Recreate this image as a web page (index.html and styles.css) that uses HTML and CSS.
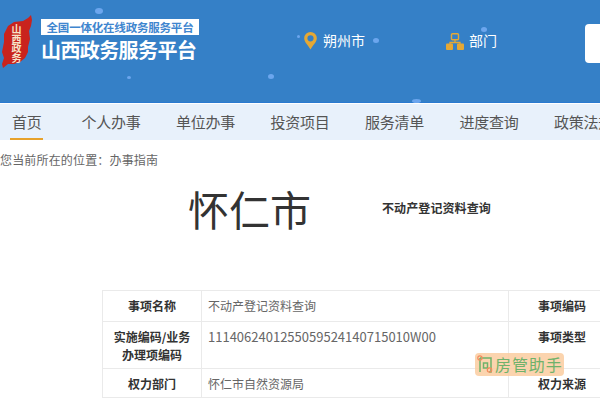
FILE: index.html
```html
<!DOCTYPE html>
<html lang="zh-CN">
<head>
<meta charset="utf-8">
<title>山西政务服务平台</title>
<link rel="stylesheet" href="styles.css">
</head>
<body>
<header class="header">
  <span class="dot d1"></span><span class="dot d2"></span><span class="dot d3"></span><span class="dot d4"></span><span class="dot d5"></span><span class="dot d6"></span><span class="dot d7"></span>
  <div class="brand">
    <div class="logo">
      <svg width="32" height="54" viewBox="0 0 32 54" aria-hidden="true"><path d="M30 1 L31 6 L30 12 L28 17 L29 25 L27 33 L27 38 L24 44 L19 48 L13 50 L7 50 L2 54 L1 50 L3 44 L1 38 L3 28 L3 20 L7 12 L13 8 L22 7 L27 4 Z" fill="#c9231d"/></svg>
      <span class="logo-text">山西政务</span>
    </div>
    <div class="titles">
      <div class="tag">全国一体化在线政务服务平台</div>
      <div class="title">山西政务服务平台</div>
    </div>
  </div>
  <div class="loc">
    <svg width="13" height="18" viewBox="0 0 13 18" aria-hidden="true"><path fill-rule="evenodd" d="M6.5 0a6.3 6.3 0 0 1 6.3 6.3c0 4-4 7-6.3 11.2C4.200 13.300.200 10.300.200 6.300A6.300 6.300 0 0 1 6.500 0Zm0 3.200a3.100 3.100 0 1 0 0 6.200 3.100 3.100 0 0 0 0-6.200Z" fill="#e5a835"/></svg>
    <span>朔州市</span>
  </div>
  <div class="dept">
    <svg width="18" height="17" viewBox="0 0 18 17" aria-hidden="true"><rect x="5.500" y=".7" width="7" height="6" rx="1" fill="none" stroke="#e5a835" stroke-width="1.400"/><path d="M9 7v3M4 11V9.500h10V11" fill="none" stroke="#e5a835" stroke-width="1.300"/><rect x="0" y="10.500" width="7" height="6.500" rx="1" fill="#e5a835"/><rect x="11" y="10.500" width="7" height="6.500" rx="1" fill="#e5a835"/></svg>
    <span>部门</span>
  </div>
  <div class="search"></div>
</header>
<nav class="nav">
  <a class="item active">首页</a>
  <a class="item">个人办事</a>
  <a class="item">单位办事</a>
  <a class="item">投资项目</a>
  <a class="item">服务清单</a>
  <a class="item">进度查询</a>
  <a class="item">政策法规</a>
</nav>
<div class="crumb">您当前所在的位置：办事指南</div>
<div class="heading">
  <h1 class="city">怀仁市</h1>
  <h2 class="name">不动产登记资料查询</h2>
</div>
<table class="info">
  <tr class="r1"><th class="c1">事项名称</th><td class="c2">不动产登记资料查询</td><th class="c3">事项编码</th></tr>
  <tr class="r2"><th class="c1">实施编码/业务办理项编码</th><td class="c2"><span class="code">1114062401255059524140715010W00</span></td><th class="c3">事项类型</th></tr>
  <tr class="r3"><th class="c1">权力部门</th><td class="c2">怀仁市自然资源局</td><th class="c3">权力来源</th></tr>
</table>
<div class="mark">
  <svg width="17" height="19" viewBox="0 0 17 19" aria-hidden="true"><path d="M3 3v14M3 3h11v14h-2M6.500 8h4v5h-4Z" fill="none" stroke="#6fb26b" stroke-width="1.500"/><circle cx="3" cy="3" r="2.200" fill="none" stroke="#f58a5c" stroke-width="1.200"/><circle cx="12.500" cy="15" r="2.200" fill="none" stroke="#f58a5c" stroke-width="1.200"/></svg>
  <span>房管助手</span>
</div>
</body>
</html>
```
FILE: styles.css
```css
html, body { margin: 0; padding: 0; height: 400px; overflow: hidden; background: #fff; }
body { position: relative; font-family: "Noto Sans CJK SC", "Noto Sans", sans-serif; color: #333; }

.header { position: relative; box-sizing: border-box; height: 104px; background: #3580c7; border-bottom: 1px solid #fff; box-shadow: inset 0 -1px 0 #2a7ad0; display: flex; align-items: flex-start; color: #fff; }
.dot { position: absolute; border-radius: 50%; background: #6ca6ee; }
.d1 { left: 95px; top: 8px; width: 8px; height: 6px; }
.d2 { left: 127px; top: 76px; width: 4px; height: 3px; }
.d3 { left: 268px; top: 74px; width: 6px; height: 5px; }
.d4 { left: 297px; top: 35px; width: 3px; height: 3px; }
.d5 { left: 373px; top: 38px; width: 6px; height: 5px; }
.d6 { left: 481px; top: 27px; width: 6px; height: 5px; }
.d7 { left: 412px; top: 99px; width: 9px; height: 4px; }

.brand { display: flex; width: 290px; padding-top: 14px; }
.logo { position: relative; width: 32px; height: 54px; margin-left: 1px; }
.logo svg { display: block; }
.logo-text { position: absolute; left: 10px; top: 10px; width: 11px; font-size: 10px; font-weight: 700; line-height: 9.500px; color: #f6e3c8; text-align: center; }
.titles { margin-left: 8px; padding-top: 5px; }
.tag { box-sizing: border-box; width: 158px; height: 16px; background: #fff; color: #3f86cf; font-size: 11.500px; font-weight: 700; line-height: 16px; text-align: center; white-space: nowrap; letter-spacing: -.2px; }
.title { margin-top: 1px; font-size: 20px; line-height: 27px; font-weight: 700; color: #fff; white-space: nowrap; letter-spacing: -.6px; }

.loc, .dept { display: flex; align-items: center; font-size: 14px; line-height: 20px; padding-top: 31px; }
.loc span, .dept span { position: relative; top: -1px; }
.loc { margin-left: 14px; gap: 6px; width: 142px; }
.dept { gap: 5px; }
.search { position: absolute; left: 585px; top: 24px; width: 15px; height: 39px; border-radius: 4px 0 0 4px; background: #fff; }

.nav { display: flex; height: 36px; background: #e8f1fb; padding-left: 12px; gap: 35.700px; white-space: nowrap; overflow: hidden; }
.item { box-sizing: border-box; height: 36px; font-size: 15px; line-height: 36px; color: #555; flex: none; letter-spacing: -.3px; }
.item.active { margin-right: 2.500px; box-shadow: 0 -2px 0 #e7a22b inset; padding: 0 2px; margin-left: -2px; }

.crumb { height: 20px; padding-top: 10px; font-size: 12px; line-height: 20px; color: #666; white-space: nowrap; letter-spacing: .17px; }

.heading { display: flex; align-items: center; height: 76px; margin: 0 0 44px; }
.city { margin: 0 0 0 188px; width: 194px; font-size: 41px; line-height: 60px; font-weight: 400; color: #333; }
.name { margin: 0; font-size: 12px; line-height: 20px; font-weight: 700; color: #333; letter-spacing: .1px; }

.info { margin-left: 102px; border-collapse: collapse; table-layout: fixed; width: 498px; font-size: 12px; }
.info th, .info td { box-sizing: border-box; border: 1px solid #eaeaea; vertical-align: top; line-height: 18px; padding: 6px 6px 4px; }
.info .r1 { height: 31px; }
.info .r2 { height: 47px; }
.info th { font-weight: 700; color: #333; text-align: center; }
.info td { font-weight: 400; color: #666; }
.info .c1 { width: 99px; }
.info .c2 { width: 307px; }
.info th.c3 { width: 92px; text-align: left; padding-left: 29px; border-right: 0; white-space: nowrap; }
.code { font-size: 13px; }

.mark { position: absolute; left: 475px; top: 353px; box-sizing: border-box; width: 89px; height: 23px; display: flex; align-items: center; gap: 1px; padding-left: 2px; background: rgba(250, 205, 160, .85); border-radius: 4px; color: #6fb26b; font-size: 16px; line-height: 23px; white-space: nowrap; letter-spacing: .9px; }
.mark svg { flex: none; }
```
